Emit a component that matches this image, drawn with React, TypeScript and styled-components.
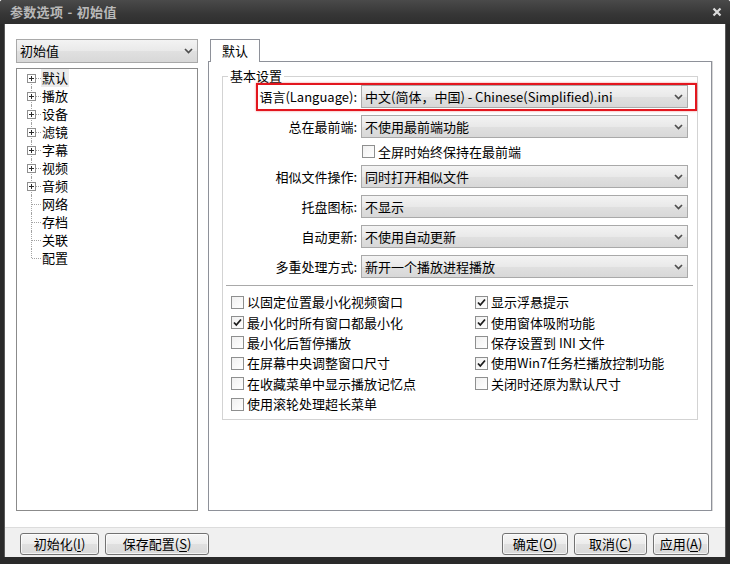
import React from "react";
import styled, {createGlobalStyle, css} from "styled-components";

const GlobalStyle = createGlobalStyle`
  html, body {
    margin: 0;
    padding: 0;
    background: #ffffff;
  }

  body {
    font-family: "Noto Sans CJK SC", "Noto Sans", sans-serif;
    font-size: 13px;
    color: #000000;
  }
`;

const Window = styled.div`
  width: 730px;
  height: 564px;
  box-sizing: border-box;
  display: flex;
  flex-direction: column;
  padding: 0 4px 7px 4px;
  background: #2a2a2a;
  border-radius: 3px 3px 0 0;
`;

const TitleBar = styled.div`
  height: 24px;
  flex: none;
  display: flex;
  align-items: center;
  justify-content: space-between;
  margin: 0 -4px;
  padding: 0 8px 0 10px;
  background: linear-gradient(#4a4a4a, #363636 60%, #2e2e2e);
  border-radius: 3px 3px 0 0;
`;

const Title = styled.span`
  color: #b9b9b9;
  font-weight: bold;
  font-size: 13px;
  line-height: 24px;
  letter-spacing: 0.3px;
  word-spacing: 1px;
`;

const Client = styled.div`
  flex: 1;
  display: flex;
  flex-direction: column;
  background: #ffffff;
  border-left: 1px solid #5a5a5a;
  border-right: 1px solid #5a5a5a;
  min-height: 0;
`;

const Main = styled.div`
  flex: 1;
  display: flex;
  gap: 10px;
  padding: 15px 13px 16px 11px;
  min-height: 0;
`;

const LeftColumn = styled.div`
  width: 182px;
  flex: none;
  display: flex;
  flex-direction: column;
  gap: 5px;
`;

const RightColumn = styled.div`
  flex: 1;
  display: flex;
  flex-direction: column;
`;

const ComboBox = styled.div<{ $height?: number }>`
  box-sizing: border-box;
  height: ${p => p.$height ?? 23}px;
  display: flex;
  align-items: center;
  justify-content: space-between;
  padding: 0 4px 0 3px;
  border: 1px solid #a9a9a9;
  background: linear-gradient(#f3f3f3, #e9e9e9 50%, #e0e0e0 51%, #d8d8d8);
  line-height: 18px;
  white-space: nowrap;
`;

const Chevron = () => (
    <svg width="9" height="6" viewBox="0 0 9 6">
        <polyline points="1,1 4.5,4.5 8,1" fill="none" stroke="#4e4e4e" strokeWidth="1.7"/>
    </svg>
);

const TreeBox = styled.div`
  flex: 1;
  border: 1px solid #8b8b8b;
`;

const TreeRow = styled.div`
  height: 18px;
  display: flex;
  align-items: stretch;
`;

const Gutter = styled.div<{ $first?: boolean; $last?: boolean }>`
  position: relative;
  width: 24px;
  flex: none;

  &::before {
    content: "";
    position: absolute;
    left: 14px;
    top: ${p => (p.$first ? "9px" : "0")};
    height: ${p => (p.$last || p.$first ? "9px" : "18px")};
    border-left: 1px dotted #a3a3a3;
  }

  &::after {
    content: "";
    position: absolute;
    left: 15px;
    top: 9px;
    width: 9px;
    border-top: 1px dotted #a3a3a3;
  }
`;

const Expander = styled.svg`
  position: absolute;
  left: 10px;
  top: 5px;
  z-index: 1;
`;

const TreeLabel = styled.span<{ $selected?: boolean }>`
  padding: 0 1px;
  line-height: 18px;
  ${p => p.$selected && css`
    background: #ebebeb;
  `}
`;

const TabStrip = styled.div`
  display: flex;
  height: 22px;
  padding-left: 2px;
`;

const Tab = styled.div`
  box-sizing: border-box;
  height: 23px;
  padding: 0 11px;
  border: 1px solid #8e9199;
  border-bottom: none;
  background: #ffffff;
  line-height: 21px;
  position: relative;
  z-index: 1;
`;

const TabPanel = styled.div`
  flex: 1;
  border: 1px solid #8e9199;
  box-shadow: 1px 0 0 #d8d8d8;
  padding: 6px 13px 0 13px;
`;

const GroupBox = styled.fieldset`
  margin: 0;
  padding: 1px 9px 5px 8px;
  border: 1px solid #d3d3d3;
  min-width: 0;
`;

const Legend = styled.legend`
  margin-left: -3px;
  padding: 0 2px;
  line-height: 16px;
`;

const FormGrid = styled.div`
  position: relative;
  display: grid;
  grid-template-columns: 126px 327px;
  grid-template-rows: 23px 23px 13px 23px 23px 23px 23px;
  column-gap: 4px;
  row-gap: 7px;
  align-items: center;
`;

const FieldLabel = styled.span`
  text-align: right;
  line-height: 18px;
  white-space: nowrap;
`;

const Highlight = styled.div`
  position: absolute;
  left: 25px;
  right: -9px;
  top: -2px;
  height: 28px;
  box-sizing: border-box;
  border: 2px solid #e3161e;
  box-shadow: 0 0 2px rgba(230, 40, 40, 0.55);
  pointer-events: none;
`;

const Separator = styled.div`
  height: 1px;
  margin: 7px -5px 0 -5px;
  background: #a9a9a9;
`;

const CheckGrid = styled.div`
  display: grid;
  grid-template-columns: 244px 1fr;
  grid-template-rows: repeat(6, 20.4px);
  grid-auto-flow: column;
  margin-top: 6px;
`;

const CheckItem = styled.label<{ $indent?: number }>`
  display: flex;
  align-items: center;
  gap: 3px;
  height: 100%;
  line-height: 18px;
  white-space: nowrap;
  padding-left: ${p => p.$indent ?? 0}px;
`;

const Box = styled.span`
  box-sizing: border-box;
  width: 13px;
  height: 13px;
  flex: none;
  border: 1px solid #8e8f8f;
  background: linear-gradient(135deg, #f0f0f0, #ffffff);
  display: flex;
  align-items: center;
  justify-content: center;
`;

const CheckBox = ({checked, label, indent}: { checked?: boolean; label: string; indent?: number }) => (
    <CheckItem $indent={indent}>
        <Box>
            {checked && (
                <svg width="11" height="11" viewBox="0 0 11 11">
                    <polyline points="2,5.5 4.3,8 9,2.5" fill="none" stroke="#1c1c1c" strokeWidth="1.8"/>
                </svg>
            )}
        </Box>
        {label}
    </CheckItem>
);

const ButtonBar = styled.div`
  height: 30px;
  flex: none;
  display: flex;
  align-items: flex-start;
  gap: 6px;
  padding: 5px 16px 0 15px;
  box-sizing: border-box;
  border-top: 1px solid #dcdcdc;
  background: #f0f0f0;
`;

const Spacer = styled.div`
  flex: 1;
`;

const Button = styled.button<{ $width: number }>`
  box-sizing: border-box;
  width: ${p => p.$width}px;
  height: 22px;
  padding: 0;
  border: 1px solid #727272;
  border-radius: 3px;
  background: linear-gradient(#f6f6f6, #ececec 50%, #e0e0e0 51%, #d9d9d9);
  box-shadow: inset 0 0 0 1px rgba(255, 255, 255, 0.7);
  font: inherit;
  color: #000000;
  line-height: 18px;

  u {
    text-underline-offset: 2px;
  }
`;

const PlusBox = () => (
    <Expander width="9" height="9" viewBox="0 0 9 9">
        <rect x="0.5" y="0.5" width="8" height="8" fill="#ffffff" stroke="#8f8f8f"/>
        <line x1="2" y1="4.5" x2="7" y2="4.5" stroke="#2b2b2b"/>
        <line x1="4.5" y1="2" x2="4.5" y2="7" stroke="#2b2b2b"/>
    </Expander>
);

const treeItems = [
    {name: "默认", expandable: true},
    {name: "播放", expandable: true},
    {name: "设备", expandable: true},
    {name: "滤镜", expandable: true},
    {name: "字幕", expandable: true},
    {name: "视频", expandable: true},
    {name: "音频", expandable: true},
    {name: "网络", expandable: false},
    {name: "存档", expandable: false},
    {name: "关联", expandable: false},
    {name: "配置", expandable: false},
];

const lowerRows = [
    {label: "相似文件操作:", value: "同时打开相似文件"},
    {label: "托盘图标:", value: "不显示"},
    {label: "自动更新:", value: "不使用自动更新"},
    {label: "多重处理方式:", value: "新开一个播放进程播放"},
];

const options = [
    {label: "以固定位置最小化视频窗口", checked: false},
    {label: "最小化时所有窗口都最小化", checked: true},
    {label: "最小化后暂停播放", checked: false},
    {label: "在屏幕中央调整窗口尺寸", checked: false},
    {label: "在收藏菜单中显示播放记忆点", checked: false},
    {label: "使用滚轮处理超长菜单", checked: false},
    {label: "显示浮悬提示", checked: true},
    {label: "使用窗体吸附功能", checked: true},
    {label: "保存设置到 INI 文件", checked: false},
    {label: "使用Win7任务栏播放控制功能", checked: true},
    {label: "关闭时还原为默认尺寸", checked: false},
];

function ComboRow({label, value}: { label: string; value: string }) {
    return <>
        <FieldLabel>{label}</FieldLabel>
        <ComboBox>
            <span>{value}</span>
            <Chevron/>
        </ComboBox>
    </>;
}

export default function App() {
    return <>
        <GlobalStyle/>
        <Window>
            <TitleBar>
                <Title>参数选项 - 初始值</Title>
                <svg width="10" height="10" viewBox="0 0 10 10">
                    <path d="M1.5 1.5 L8.5 8.5 M8.5 1.5 L1.5 8.5" stroke="#dcdcdc" strokeWidth="2.2"/>
                </svg>
            </TitleBar>
            <Client>
                <Main>
                    <LeftColumn>
                        <ComboBox $height={24}>
                            <span>初始值</span>
                            <Chevron/>
                        </ComboBox>
                        <TreeBox>
                            {treeItems.map((item, i) => (
                                <TreeRow key={item.name}>
                                    <Gutter $first={i === 0} $last={i === treeItems.length - 1}>
                                        {item.expandable && <PlusBox/>}
                                    </Gutter>
                                    <TreeLabel $selected={i === 0}>{item.name}</TreeLabel>
                                </TreeRow>
                            ))}
                        </TreeBox>
                    </LeftColumn>
                    <RightColumn>
                        <TabStrip>
                            <Tab>默认</Tab>
                        </TabStrip>
                        <TabPanel>
                            <GroupBox>
                                <Legend>基本设置</Legend>
                                <FormGrid>
                                    <Highlight/>
                                    <ComboRow label="语言(Language):" value="中文(简体，中国) - Chinese(Simplified).ini"/>
                                    <ComboRow label="总在最前端:" value="不使用最前端功能"/>
                                    <span/>
                                    <CheckBox label="全屏时始终保持在最前端" indent={1}/>
                                    {lowerRows.map(row => <ComboRow key={row.label} {...row}/>)}
                                </FormGrid>
                                <Separator/>
                                <CheckGrid>
                                    {options.map(o => <CheckBox key={o.label} label={o.label} checked={o.checked}/>)}
                                </CheckGrid>
                            </GroupBox>
                        </TabPanel>
                    </RightColumn>
                </Main>
                <ButtonBar>
                    <Button $width={79}>初始化(<u>I</u>)</Button>
                    <Button $width={104}>保存配置(<u>S</u>)</Button>
                    <Spacer/>
                    <Button $width={66}>确定(<u>O</u>)</Button>
                    <Button $width={73}>取消(<u>C</u>)</Button>
                    <Button $width={56}>应用(<u>A</u>)</Button>
                </ButtonBar>
            </Client>
        </Window>
    </>;
}
